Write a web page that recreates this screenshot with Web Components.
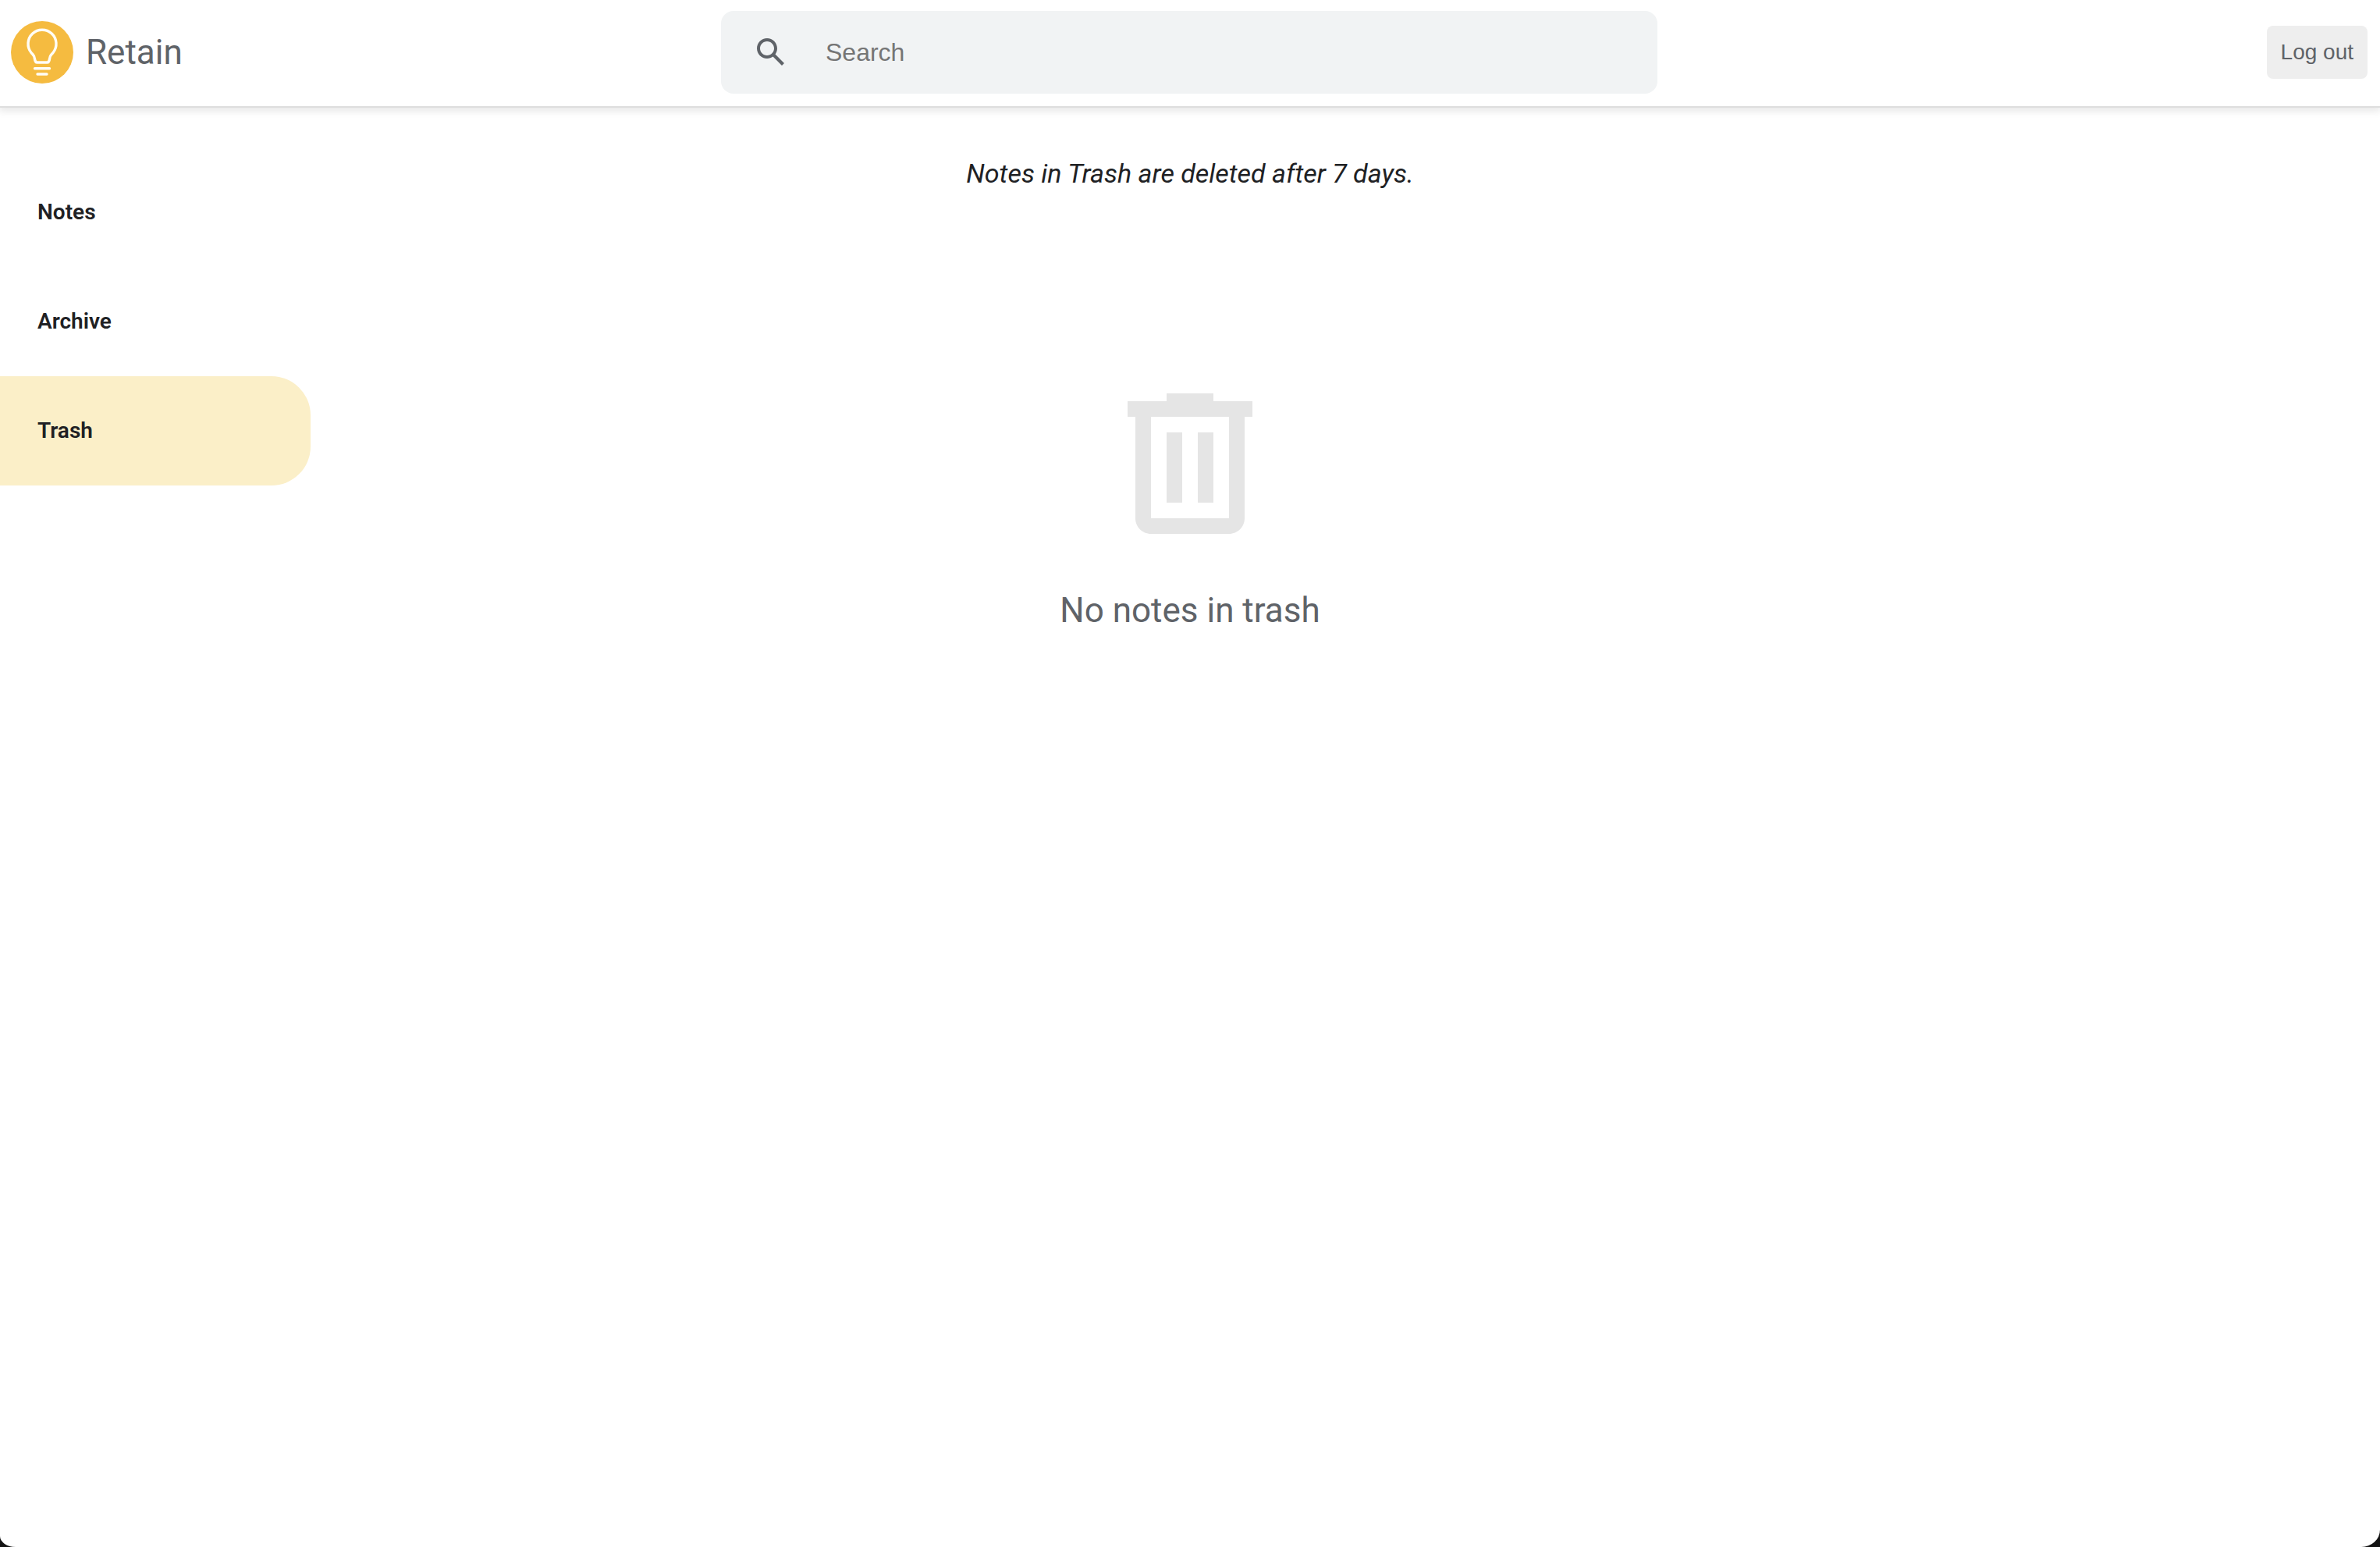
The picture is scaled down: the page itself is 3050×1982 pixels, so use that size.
<!DOCTYPE html>
<html lang="en">
<head>
<meta charset="utf-8">
<title>Retain</title>
<style>
  html { background: #141414; }
  body { margin: 0; min-height: 100vh; display: flex; font-family: Roboto, "Liberation Sans", sans-serif; color: #202124; }
  retain-app { flex: 1; }
</style>
</head>
<body>
<retain-app></retain-app>
<script>
const define = (name, html) => {
  const template = document.createElement('template');
  template.innerHTML = html;
  customElements.define(name, class extends HTMLElement {
    constructor() {
      super();
      this.attachShadow({ mode: 'open' }).append(template.content.cloneNode(true));
    }
  });
};

define('retain-logo', `
  <style>
    :host { display: flex; align-items: center; gap: 16px; font-size: 44px; line-height: 48px; color: #5f6368; }
    svg { display: block; width: 80px; height: 80px; }
  </style>
  <svg viewBox="0 0 80 80" aria-hidden="true">
    <circle cx="40" cy="40" r="40" fill="#f5bb40"/>
    <g fill="none" stroke="#fffdf6" stroke-width="3.4" stroke-linecap="round" stroke-linejoin="round">
      <path d="M30.500 48.500C30 43.500 28.500 43.500 26 40.500A18 18 0 1 1 54 40.500C51.500 43.500 50 43.500 49.500 48.500Q49 53 46.500 53H33.500Q31 53 30.500 48.500Z"/>
      <path d="M30.500 60.800H49.500M34 68H46"/>
    </g>
  </svg>
  <span><slot></slot></span>`);

define('search-bar', `
  <style>
    :host { display: block; }
    form { display: flex; align-items: center; gap: 46px; box-sizing: border-box; height: 106px; padding: 0 40px; border-radius: 16px; background: #f1f3f4; }
    label { display: block; }
    svg { display: block; width: 48px; height: 48px; fill: #5f6368; }
    input { flex: 1; min-width: 0; border: 0; padding: 0; outline: 0; background: none; font: 32px/40px "Liberation Sans", sans-serif; color: #202124; }
    input::placeholder { color: #757575; opacity: 1; }
  </style>
  <form>
    <label for="q" aria-label="Search"><svg viewBox="0 0 24 24"><path d="M20.490 19l-5.730-5.730C15.530 12.200 16 10.910 16 9.500 16 5.910 13.090 3 9.500 3S3 5.910 3 9.500 5.910 16 9.500 16c1.410 0 2.700-.47 3.770-1.240L19 20.490 20.490 19zM5 9.500C5 7.010 7.010 5 9.500 5S14 7.010 14 9.500 11.990 14 9.500 14 5 11.990 5 9.500z"/></svg></label>
    <input id="q" type="text" placeholder="Search">
  </form>`);

define('app-button', `
  <style>
    :host { display: block; }
    button { display: block; border: 0; border-radius: 8px; padding: 18px; background: #eee; color: #5f6368; font: 28px/32px "Liberation Sans", sans-serif; }
  </style>
  <button type="button"><slot></slot></button>`);

define('app-header', `
  <style>
    :host { display: grid; grid-template-columns: 1fr minmax(0, 1200px) 1fr; align-items: center; padding: 14px 16px 16px 14px; border-bottom: 2px solid #dedede; box-shadow: 0 2px 10px 2px rgba(0,0,0,.1); }
    app-button { justify-self: end; }
  </style>
  <retain-logo>Retain</retain-logo>
  <search-bar></search-bar>
  <app-button>Log out</app-button>`);

define('nav-item', `
  <style>
    :host { display: block; }
    a { display: flex; align-items: center; height: 140px; padding-left: 48px; border-radius: 0 50px 50px 0; color: #202124; text-decoration: none; font-size: 28px; line-height: 32px; font-weight: 600; }
    :host([active]) a { background: #fbefc8; }
  </style>
  <a href="#"><slot></slot></a>`);

define('side-nav', `
  <style>
    nav { display: flex; flex-direction: column; width: 398px; padding-top: 64px; }
  </style>
  <nav>
    <nav-item>Notes</nav-item>
    <nav-item>Archive</nav-item>
    <nav-item active>Trash</nav-item>
  </nav>`);

define('trash-view', `
  <style>
    :host { display: flex; flex-direction: column; align-items: center; padding-top: 64px; }
    .notice { font-size: 34px; line-height: 40px; font-style: italic; }
    svg { display: block; width: 240px; height: 240px; margin: 232px 0 44px; fill: #e5e5e5; }
    .empty { font-size: 44px; line-height: 48px; color: #5f6368; }
    p { margin: 0; }
  </style>
  <p class="notice">Notes in Trash are deleted after 7 days.</p>
  <svg viewBox="0 0 24 24" aria-hidden="true"><path d="M15 4V3H9v1H4v2h1v13c0 1.100.9 2 2 2h10c1.100 0 2-.9 2-2V6h1V4h-5zm2 15H7V6h10v13z"/><path d="M9 8h2v9H9zm4 0h2v9h-2z"/></svg>
  <p class="empty">No notes in trash</p>`);

define('retain-app', `
  <style>
    :host { display: flex; flex-direction: column; background: #fff; border-radius: 0 0 24px 20px / 0 0 22px 14px; }
    .body { display: grid; grid-template-columns: 1fr auto 1fr; }
    side-nav { justify-self: start; }
  </style>
  <app-header></app-header>
  <div class="body">
    <side-nav></side-nav>
    <trash-view></trash-view>
  </div>`);
</script>
</body>
</html>
